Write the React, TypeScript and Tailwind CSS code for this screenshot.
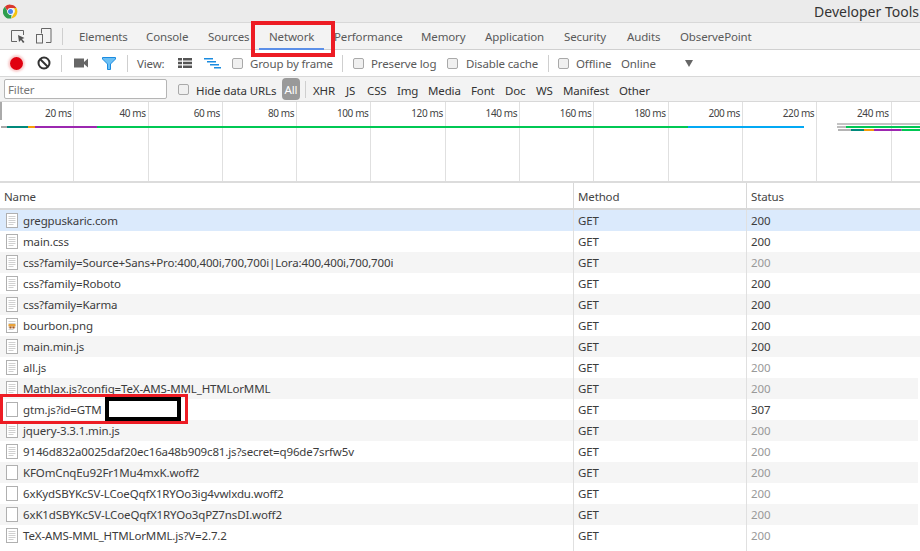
import React from "react";

const rows = [
  { name: "gregpuskaric.com", status: "200", icon: "doc", dim: false, bg: "bg-[#dbeafc]", w: "w-full" },
  { name: "main.css", status: "200", icon: "doc", dim: false, bg: "bg-white", w: "w-full" },
  { name: "css?family=Source+Sans+Pro:400,400i,700,700i|Lora:400,400i,700,700i", status: "200", icon: "doc", dim: true, bg: "bg-[#f5f5f5]", w: "w-full" },
  { name: "css?family=Roboto", status: "200", icon: "doc", dim: false, bg: "bg-white", w: "w-full" },
  { name: "css?family=Karma", status: "200", icon: "doc", dim: false, bg: "bg-[#f5f5f5]", w: "w-full" },
  { name: "bourbon.png", status: "200", icon: "img", dim: false, bg: "bg-white", w: "w-full" },
  { name: "main.min.js", status: "200", icon: "doc", dim: false, bg: "bg-[#f5f5f5]", w: "w-full" },
  { name: "all.js", status: "200", icon: "doc", dim: true, bg: "bg-white", w: "w-full" },
  { name: "MathJax.js?config=TeX-AMS-MML_HTMLorMML", status: "200", icon: "doc", dim: true, bg: "bg-[#f5f5f5]", w: "w-[918px]" },
  { name: "gtm.js?id=GTM", status: "307", icon: "blank", dim: false, bg: "bg-white", w: "w-[918px]" },
  { name: "jquery-3.3.1.min.js", status: "200", icon: "doc", dim: true, bg: "bg-[#f5f5f5]", w: "w-[918px]" },
  { name: "9146d832a0025daf20ec16a48b909c81.js?secret=q96de7srfw5v", status: "200", icon: "doc", dim: true, bg: "bg-white", w: "w-[918px]" },
  { name: "KFOmCnqEu92Fr1Mu4mxK.woff2", status: "200", icon: "blank", dim: true, bg: "bg-[#f5f5f5]", w: "w-[918px]" },
  { name: "6xKydSBYKcSV-LCoeQqfX1RYOo3ig4vwlxdu.woff2", status: "200", icon: "blank", dim: true, bg: "bg-white", w: "w-[918px]" },
  { name: "6xK1dSBYKcSV-LCoeQqfX1RYOo3qPZ7nsDI.woff2", status: "200", icon: "blank", dim: true, bg: "bg-[#f5f5f5]", w: "w-[918px]" },
  { name: "TeX-AMS-MML_HTMLorMML.js?V=2.7.2", status: "200", icon: "doc", dim: true, bg: "bg-white", w: "w-[918px]" },
];

const ticks = ["20 ms", "40 ms", "60 ms", "80 ms", "100 ms", "120 ms", "140 ms", "160 ms", "180 ms", "200 ms", "220 ms", "240 ms"];

const tabs = [
  { label: "Elements", cls: "w-[67px]" },
  { label: "Console", cls: "w-[62px]" },
  { label: "Sources", cls: "w-[61px]" },
  { label: "Network", cls: "w-[65px]" },
  { label: "Performance", cls: "w-[87px]" },
  { label: "Memory", cls: "w-[64px]" },
  { label: "Application", cls: "w-[79px]" },
  { label: "Security", cls: "w-[63px]" },
  { label: "Audits", cls: "w-[53px]" },
  { label: "ObservePoint", cls: "w-[90px]" },
];

const filters = [
  { label: "XHR", cls: "w-[33px]" },
  { label: "JS", cls: "w-[21px]" },
  { label: "CSS", cls: "w-[30px]" },
  { label: "Img", cls: "w-[31px]" },
  { label: "Media", cls: "w-[43px]" },
  { label: "Font", cls: "w-[34px]" },
  { label: "Doc", cls: "w-[31px]" },
  { label: "WS", cls: "w-[27px]" },
  { label: "Manifest", cls: "w-[56px]" },
  { label: "Other", cls: "w-[40px]" },
];

function FileIcon({ kind }: { kind: string }) {
  return (
    <svg width="12" height="15" viewBox="0 0 12 15" className="shrink-0">
      <rect x="0.5" y="0.5" width="11" height="14" fill="#fff" stroke="#b0b0b0" />
      {kind !== "blank" && (
        <path d="M2.5 3.5h7M2.5 5.5h7M2.5 7.5h7M2.5 9.5h7M2.5 11.5h5" stroke="#d0d0d0" strokeWidth="1" />
      )}
      {kind === "img" && (
        <>
          <rect x="2.5" y="6" width="7" height="2.500" fill="#e8a33c" />
          <rect x="3.5" y="8.5" width="2" height="2" fill="#a8561c" />
          <rect x="6.5" y="8.5" width="2" height="2" fill="#a8561c" />
        </>
      )}
    </svg>
  );
}

function Check() {
  return <span className="block w-[11px] h-[11px] shrink-0 rounded-[2px] border border-[#a9a9a9] bg-[#f0f0f0]" />;
}

function Sep() {
  return <span className="block w-px h-[17px] bg-[#cfcfcf] shrink-0" />;
}

function ChromeLogo() {
  return (
    <svg width="15" height="15" viewBox="0 0 48 48">
      <path d="M24 2a22 22 0 0 1 19 11H24a11 11 0 0 0-10.500 7.500L6 9A22 22 0 0 1 24 2z" fill="#d9372c" />
      <path d="M43 13a22 22 0 0 1-17 33l9-16a11 11 0 0 0-1-17z" fill="#f4c20d" />
      <path d="M26 46A22 22 0 0 1 6 9l8 14a11 11 0 0 0 13 11.500z" fill="#2f9e4f" />
      <circle cx="24" cy="24" r="10" fill="#fff" />
      <circle cx="24" cy="24" r="8" fill="#4a85ec" />
    </svg>
  );
}

export default function App() {
  return (
    <div className="relative w-[920px] h-[551px] overflow-hidden bg-white font-['Noto_Sans',sans-serif] text-[11.5px] tracking-[-0.14px] text-[#333]">
      {/* window title */}
      <div className="h-[23px] bg-[#ebebeb] border-b border-[#d8d8d8] flex items-center pl-[3px]">
        <ChromeLogo />
        <span className="ml-auto mr-[1px] text-[14px] tracking-normal text-[#333] whitespace-nowrap">Developer Tools</span>
      </div>

      {/* tabs */}
      <div className="h-[27px] bg-[#f3f3f3] border-b border-[#d0d0d0] flex items-center text-[#5a5a5a]">
        <svg width="16" height="15" viewBox="0 0 16 15" className="ml-[10px]" fill="none">
          <path d="M7 12.500H1.500V1.500h12V6" stroke="#666" />
          <path d="M8 6l6.500 3-2.500 1 2.500 3-1.500 1-2-3-2 2z" fill="#555" />
        </svg>
        <svg width="16" height="16" viewBox="0 0 16 16" className="ml-[10px]" fill="none" stroke="#666">
          <path d="M5.500 5.500V.5h9.500v14H10" />
          <rect x="0.500" y="6.500" width="6" height="8.500" />
        </svg>
        <span className="ml-[10px] mr-[16px]"><Sep /></span>
        <div className="flex">
          {tabs.map((t) => (
            <span key={t.label} className={t.cls + " whitespace-nowrap leading-[26px] pt-[2px] " + (t.label === "Network" ? "relative" : "")}>
              {t.label}
              {t.label === "Network" && (
                <span className="absolute left-[-10px] w-[65px] bottom-0 h-[2px] bg-[#5b8fe8]" />
              )}
            </span>
          ))}
        </div>
      </div>

      {/* toolbar */}
      <div className="h-[27px] bg-white border-b border-[#d8d8d8] flex items-center text-[#5a5a5a]">
        <span className="ml-[10px] w-[13px] h-[13px] rounded-full bg-[#e0000f] shadow-[0_0_2px_2px_rgba(230,60,60,0.25)]" />
        <svg width="14" height="14" viewBox="0 0 14 14" className="ml-[14px]" fill="none" stroke="#333" strokeWidth="2">
          <circle cx="7" cy="7" r="5.500" />
          <path d="M3 3l8 8" />
        </svg>
        <span className="ml-[10px]"><Sep /></span>
        <svg width="14" height="10" viewBox="0 0 14 10" className="ml-[12px]" fill="#666">
          <rect x="0" y="0.500" width="10" height="9" />
          <path d="M10 4l4-3.500v9L10 6z" />
        </svg>
        <svg width="14" height="13" viewBox="0 0 14 13" className="ml-[14px]" fill="#6cc0f4" stroke="#1a8be0">
          <path d="M.5.5h13v1.500L8.500 7v5.500h-3V7L.5 2z" />
        </svg>
        <span className="ml-[11px]"><Sep /></span>
        <span className="ml-[9px] w-[41px] pt-[1px]">View:</span>
        <svg width="14" height="10" viewBox="0 0 14 10" fill="#555">
          <path d="M0 0h4v2.500H0zM5 0h9v2.500H5zM0 3.700h4v2.500H0zM5 3.700h9v2.500H5zM0 7.500h4V10H0zM5 7.500h9V10H5z" />
        </svg>
        <svg width="17" height="11" viewBox="0 0 17 11" className="ml-[12px]" fill="#1a8be0">
          <path d="M0 0h9v1.500H0zM3 3h9v1.500H3zM6 6h9v1.500H6zM10 9h7v1.500h-7z" />
        </svg>
        <span className="ml-[11px]"><Check /></span>
        <span className="ml-[7px] w-[92px] whitespace-nowrap pt-[1px]">Group by frame</span>
        <Sep />
        <span className="ml-[10px]"><Check /></span>
        <span className="ml-[7px] w-[76px] whitespace-nowrap pt-[1px]">Preserve log</span>
        <Check />
        <span className="ml-[8px] w-[82px] whitespace-nowrap pt-[1px]">Disable cache</span>
        <Sep />
        <span className="ml-[9px]"><Check /></span>
        <span className="ml-[7px] w-[45px] whitespace-nowrap pt-[1px]">Offline</span>
        <span className="w-[64px] whitespace-nowrap pt-[1px]">Online</span>
        <span className="w-0 h-0 border-x-[4px] border-x-transparent border-t-[7px] border-t-[#666]" />
      </div>

      {/* filter bar */}
      <div className="h-[25px] bg-[#f3f3f3] border-b border-[#d8d8d8] flex items-center text-[#333]">
        <div className="ml-[4px] w-[163px] h-[20px] bg-white border border-[#b5b5b5] rounded-[2px] pl-[3px] leading-[19px] text-[#777]">Filter</div>
        <span className="ml-[11px]"><Check /></span>
        <span className="ml-[7px] w-[86px] whitespace-nowrap pt-[3px]">Hide data URLs</span>
        <span className="w-[18px] h-[22px] rounded-[4px] bg-[#999] text-white text-center leading-[23px]">All</span>
        <span className="ml-[5px] mr-[7px]"><span className="block w-px h-[17px] bg-[#cfcfcf]" /></span>
        {filters.map((f) => (
          <span key={f.label} className={f.cls + " whitespace-nowrap pt-[3px]"}>{f.label}</span>
        ))}
      </div>

      {/* overview timeline */}
      <div className="relative h-[81px] border-b-2 border-[#dcdcdc] flex">
        {ticks.map((t) => (
          <div key={t} className="w-[74.3px] shrink-0 h-full border-r border-[#e0e0e0] text-right pr-[2px] pt-[4px] text-[10px] tracking-[-0.4px] text-[#444] whitespace-nowrap">
            {t}
          </div>
        ))}
        <span className="absolute left-0 top-0 w-[2px] h-[18px] bg-[#aaa]" />
        <div className="absolute left-[1px] top-[24px] flex h-[2px] w-[803px]">
          <span className="w-[6px] bg-[#a8a8a8]" />
          <span className="w-[21px] bg-[#00897b]" />
          <span className="w-[7px] bg-[#f59d0a]" />
          <span className="w-[62px] bg-[#9c27b0]" />
          <span className="w-[591px] bg-[#00c853]" />
          <span className="w-[116px] bg-[#03a9f4]" />
        </div>
        <div className="absolute left-[837px] top-[21px] w-[83px] h-[2px] bg-[#c4c4c4]" />
        <div className="absolute left-[837px] top-[24px] flex w-[83px] h-[2px]">
          <span className="w-[9px] bg-[#bdbdbd]" />
          <span className="flex-1 bg-[#00c853]" />
        </div>
        <div className="absolute left-[838px] top-[27px] flex w-[82px] h-[2px]">
          <span className="w-[13px] bg-[#b4b4b4]" />
          <span className="w-[13px] bg-[#00897b]" />
          <span className="w-[10px] bg-[#f59d0a]" />
          <span className="w-[27px] bg-[#9c27b0]" />
          <span className="w-px bg-[#888]" />
          <span className="flex-1 bg-[#00c853]" />
        </div>
      </div>

      {/* request table */}
      <div className="grid grid-cols-[573px_173px_1fr] h-[27px] border-b-2 border-[#d8d8d8] items-center text-[#444]">
        <span className="pl-[4px] pt-[1px]">Name</span>
        <span className="h-full pl-[4px] border-l border-[#d8d8d8] leading-[27px]">Method</span>
        <span className="h-full pl-[4px] border-l border-[#d8d8d8] leading-[27px]">Status</span>
      </div>
      {rows.map((r) => (
        <div key={r.name} className={r.bg + " " + r.w + " grid grid-cols-[573px_173px_1fr] h-[21px] items-center text-[#3c3c3c]"}>
          <span className="flex items-center pl-[6px] gap-[5px] whitespace-nowrap overflow-hidden leading-[21px]">
            <FileIcon kind={r.icon} />
            <span>{r.name}</span>
          </span>
          <span className="h-full pl-[4px] border-l border-[#e0e0e0] leading-[21px]">GET</span>
          <span className={"h-full pl-[4px] border-l border-[#e0e0e0] leading-[21px] " + (r.dim ? "text-[#999]" : "text-[#3c3c3c]")}>{r.status}</span>
        </div>
      ))}
      <div className="grid grid-cols-[573px_173px_1fr] h-full">
        <span />
        <span className="border-l border-[#e0e0e0]" />
        <span className="border-l border-[#e0e0e0]" />
      </div>

      {/* annotations drawn on top of the screenshot */}
      <div className="absolute left-[251px] top-[21px] w-[84px] h-[36px] border-[4px] border-[#ed1c24]" />
      <div className="absolute left-0 top-[394px] w-[188px] h-[30px] border-[3px] border-[#ed1c24]" />
      <div className="absolute left-[105px] top-[397px] w-[76px] h-[24px] border-[4px] border-black bg-white" />
    </div>
  );
}
